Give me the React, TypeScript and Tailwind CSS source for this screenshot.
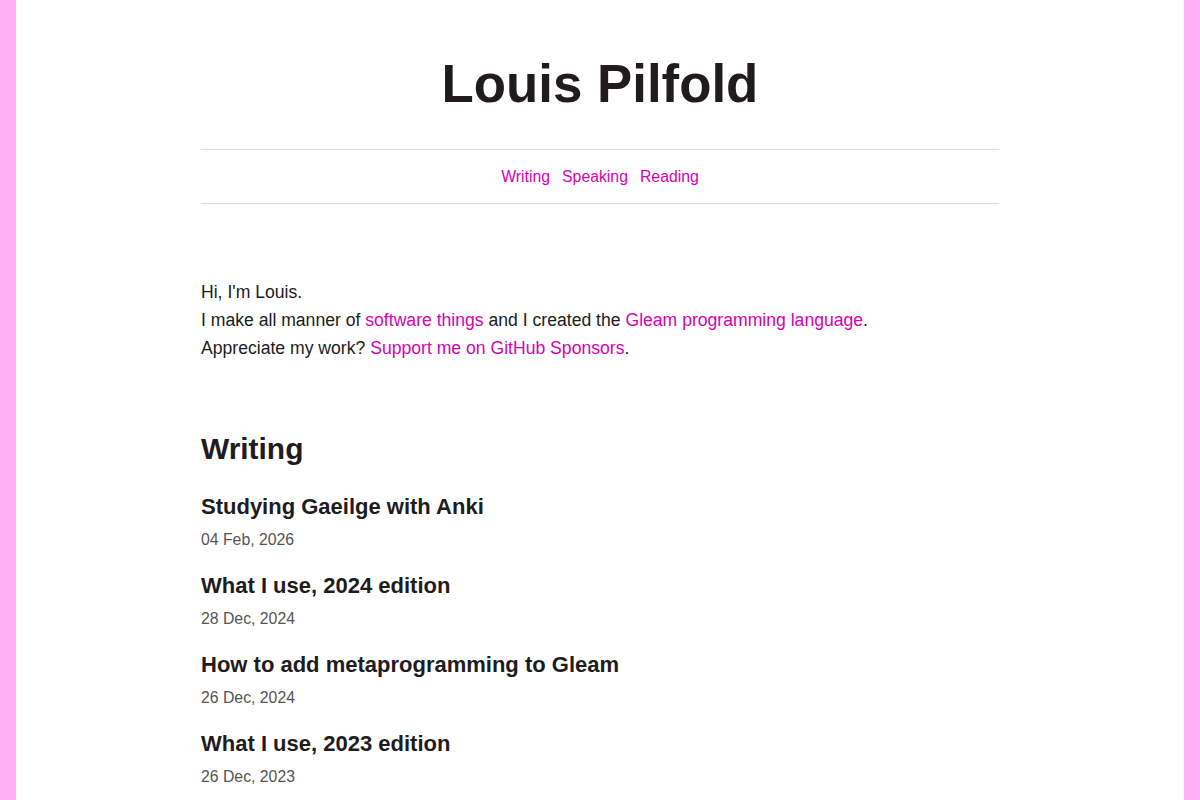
import React from 'react';

type Post = { title: string; date: string };

const posts: Post[] = [
    { title: 'Studying Gaeilge with Anki', date: '04 Feb, 2026' },
    { title: 'What I use, 2024 edition', date: '28 Dec, 2024' },
    { title: 'How to add metaprogramming to Gleam', date: '26 Dec, 2024' },
    { title: 'What I use, 2023 edition', date: '26 Dec, 2023' },
];

const Link: React.FC<{ children: React.ReactNode }> = ({ children }) => (
    <a href="#" className="text-[#d900b8] hover:underline">{children}</a>
);

const App: React.FC = () => {
    return (
        <div className="min-h-screen bg-[#ffaff3] px-4 font-['Liberation_Sans',Arial,sans-serif] text-[#211c1c]">
            <div className="min-h-screen bg-white pt-[50px] pb-16">
                <div className="mx-auto w-[798px]">
                    <h1 className="text-center text-[52.8px] font-bold leading-[67px]">Louis Pilfold</h1>

                    {/* Site navigation */}
                    <nav className="mt-8 flex justify-center gap-3 border-y border-[#dcdcdc] py-4 text-[15.8px] leading-[21px]">
                        <Link>Writing</Link>
                        <Link>Speaking</Link>
                        <Link>Reading</Link>
                    </nav>

                    <p className="mt-[74px] text-[17.6px] leading-7">
                        Hi, I'm Louis.
                        <br />
                        I make all manner of <Link>software things</Link> and I created the{' '}
                        <Link>Gleam programming language</Link>.
                        <br />
                        Appreciate my work? <Link>Support me on GitHub Sponsors</Link>.
                    </p>

                    <section className="mt-[69px]">
                        <h2 className="text-[29.9px] font-bold leading-9">Writing</h2>
                        <ul className="mt-[26px] flex flex-col gap-5">
                            {posts.map(post => (
                                <li key={post.title}>
                                    <h3 className="text-[22px] font-bold leading-7">{post.title}</h3>
                                    <div className="mt-[7px] text-[15.8px] leading-6 text-[#555]">{post.date}</div>
                                </li>
                            ))}
                        </ul>
                    </section>
                </div>
            </div>
        </div>
    );
};

export default App;
